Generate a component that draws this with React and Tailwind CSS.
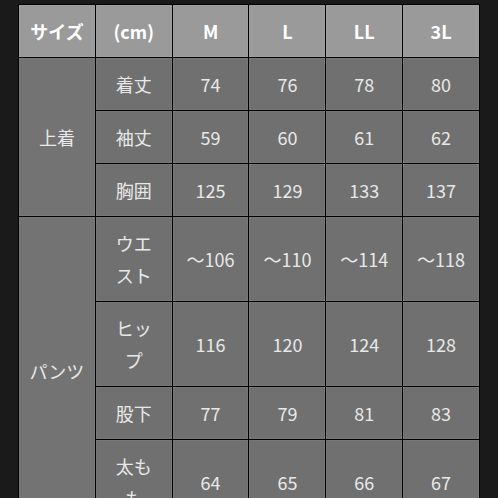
const SIZES = ['M', 'L', 'LL', '3L']

const GROUPS = [
  {
    name: '上着',
    rows: [
      { label: '着丈', values: ['74', '76', '78', '80'] },
      { label: '袖丈', values: ['59', '60', '61', '62'] },
      { label: '胸囲', values: ['125', '129', '133', '137'] },
    ],
  },
  {
    name: 'パンツ',
    rows: [
      { label: 'ウエスト', values: ['〜106', '〜110', '〜114', '〜118'] },
      { label: 'ヒップ', values: ['116', '120', '124', '128'] },
      { label: '股下', values: ['77', '79', '81', '83'] },
      { label: '太もも', values: ['64', '65', '66', '67'] },
    ],
  },
]

const base = 'border border-black py-[10px] leading-[32px] text-center align-middle shadow-[inset_0_0_0_1px_rgba(255,255,255,0.05)]'
const cell = `${base} px-[12px]`
const wide = `${base} px-[6px]`

export default function App() {
  return (
    <div
      className="h-[498px] w-[498px] overflow-hidden bg-[#1a1a1a] pl-[18px] pt-[4px]"
      style={{ fontFamily: '"Noto Sans CJK JP", "Noto Sans", sans-serif' }}
    >
      <table className="w-[462px] table-fixed border-collapse text-[18px]">
        <thead>
          <tr className="bg-[#9a9a9a] font-bold text-white">
            <th className={wide}>サイズ</th>
            <th className={cell}>(cm)</th>
            {SIZES.map((s) => (
              <th key={s} className={cell}>{s}</th>
            ))}
          </tr>
        </thead>
        <tbody className="text-[#e8e8e8]">
          {GROUPS.map((g) =>
            g.rows.map((r, i) => (
              <tr key={r.label} className="bg-[#707070]">
                {i === 0 && (
                  <td rowSpan={g.rows.length} className={`${wide} bg-[#737373]`}>
                    {g.name}
                  </td>
                )}
                <td className={cell}>{r.label}</td>
                {r.values.map((v, j) => (
                  <td key={j} className={cell}>{v}</td>
                ))}
              </tr>
            ))
          )}
        </tbody>
      </table>
    </div>
  )
}
